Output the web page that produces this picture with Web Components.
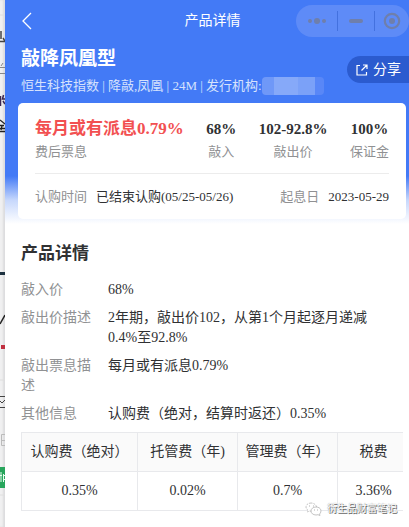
<!DOCTYPE html>
<html lang="zh-CN">
<head>
<meta charset="utf-8">
<meta name="viewport" content="width=device-width, initial-scale=1">
<title>产品详情</title>
<style>
  body {
    margin: 0;
    background: #fff;
    color: #303133;
    font-family: "Liberation Serif", "Noto Sans CJK SC", serif;
    font-size: 14px;
    line-height: 20px;
  }
</style>
</head>
<body>
<product-page>
  <page-edge slot="edge"></page-edge>
  <nav-bar slot="hero">产品详情</nav-bar>
  <product-title slot="hero" name="敲降凤凰型">恒生科技指数 | 降敲,凤凰 | 24M | 发行机构:</product-title>
  <summary-card slot="hero">
    <stat-item label="费后票息" main>每月或有派息0.79%</stat-item>
    <stat-item label="敲入">68%</stat-item>
    <stat-item label="敲出价">102-92.8%</stat-item>
    <stat-item label="保证金">100%</stat-item>
    <date-item slot="dates" label="认购时间">已结束认购(05/25-05/26)</date-item>
    <date-item slot="dates" label="起息日">2023-05-29</date-item>
  </summary-card>
  <detail-section heading="产品详情">
    <detail-row label="敲入价">68%</detail-row>
    <detail-row label="敲出价描述">2年期，敲出价102，从第1个月起逐月递减0.4%至92.8%</detail-row>
    <detail-row label="敲出票息描述">每月或有派息0.79%</detail-row>
    <detail-row label="其他信息">认购费（绝对，结算时返还）0.35%</detail-row>
    <fee-table></fee-table>
  </detail-section>
  <account-mark slot="mark">衍生品财富笔记</account-mark>
</product-page>

<script>
/**
 * Base class: puts the markup in an open shadow root
 */
class BaseElement extends HTMLElement {
  constructor() {
    super();
    this.attachShadow({ mode: 'open' });
  }

  connectedCallback() {
    this.shadowRoot.innerHTML = this.template();
  }
}

/**
 * Page frame: narrow edge of the window behind, and the product page
 */
class ProductPage extends BaseElement {
  template() {
    return `
      <style>
        :host {
          display: grid;
          grid-template-columns: 5px minmax(0, 1fr);
          position: relative;
          min-height: 100vh;
          overflow: hidden;
        }
        .hero {
          padding-bottom: 6px;
          background: linear-gradient(#437af6 0, #437af6 176px, #c6d7fc 200px, #fff 224px);
        }
      </style>
      <slot name="edge"></slot>
      <main>
        <div class="hero"><slot name="hero"></slot></div>
        <slot></slot>
      </main>
      <slot name="mark"></slot>
    `;
  }
}

/**
 * Visible edge of the window that lies behind
 */
class PageEdge extends BaseElement {
  template() {
    return `
      <style>
        :host { display: block; background: #f0f0f1; box-shadow: inset -2px 0 2px #dcdcde; }
        svg { display: block; width: 5px; height: 527px; overflow: hidden; }
      </style>
      <svg viewBox="0 0 5 527" aria-hidden="true">
        <path d="M0 15H5M0 380H5M0 495H5" stroke="#dedede"/>
        <path d="M1 31v8M0 41.500h5M3 38l2 3" stroke="#444" stroke-width="1.5" fill="none"/>
        <path d="M1 66l2-3M0 67.500h5M0 73.500h5" stroke="#888" fill="none"/>
        <path d="M.5 96v10M3.500 95l-1 4h3M3 101l2 3" stroke="#3b2750" stroke-width="1.5" fill="none"/>
        <path d="M0 120l5 4M0 125.500h4M0 128.500h5M2 126l-1 4M0 131.500h5" stroke="#222" stroke-width="1.3" fill="none"/>
        <path d="M0 273.500h5" stroke="#1d3140" stroke-width="3"/>
        <path d="M0 324l5-9" stroke="#222" stroke-width="1.5" fill="none"/>
        <path d="M1 347h4" stroke="#c03040" stroke-width="4"/>
        <path d="M0 396.500h5M0 407.500h5M0 401l2 2 3-3" stroke="#444" fill="none"/>
        <path d="M5 434.500H1.500v11H5M2 440.500h3" stroke="#bbb" fill="none"/>
        <path d="M0 467h5v21H0z" fill="#28a55c"/>
        <path d="M0 475.500h2M1 472v10M3.500 474v8M3 475.500h2M3 479.500h2" stroke="#e8fff0" fill="none"/>
      </svg>
    `;
  }
}

/**
 * Top bar with back button, page title and the mini program capsule
 */
class NavBar extends BaseElement {
  template() {
    return `
      <style>
        :host {
          display: grid;
          grid-template-columns: 124px 1fr 113px;
          align-items: center;
          height: 42px;
          color: #fff;
        }
        button { display: block; border: 0; padding: 0; background: none; cursor: pointer; }
        .back { margin-left: 16px; width: 12px; }
        svg { display: block; }
        .title { margin: 0; font-size: 14px; font-weight: 400; text-align: center; }
        .capsule {
          display: grid;
          grid-template-columns: 41px 37px 35px;
          align-items: center;
          height: 32px;
          border-radius: 16px;
          background: #5e8bf7;
        }
        .capsule button { height: 20px; }
        .capsule button + button { border-left: 1px solid #4371df; }
        .capsule svg { margin: auto; }
      </style>
      <button class="back" aria-label="返回">
        <svg width="12" height="18" viewBox="0 0 12 18" fill="none" stroke="#fff" stroke-width="1.3"><path d="M10 1L2 9l8 8"/></svg>
      </button>
      <h1 class="title"><slot></slot></h1>
      <div class="capsule">
        <button aria-label="更多">
          <svg width="20" height="8" viewBox="0 0 20 8" fill="#6f7fab"><circle cx="3" cy="4" r="2"/><circle cx="10" cy="4" r="3"/><circle cx="17" cy="4" r="2"/></svg>
        </button>
        <button aria-label="最小化">
          <svg width="16" height="4" viewBox="0 0 16 4"><rect x="1" y="0" width="14" height="4" rx="2" fill="#6f7fab"/></svg>
        </button>
        <button aria-label="关闭">
          <svg width="18" height="18" viewBox="0 0 18 18"><circle cx="9" cy="9" r="7.2" fill="none" stroke="#6f7fab" stroke-width="2.2"/><circle cx="9" cy="9" r="3" fill="#6f7fab"/></svg>
        </button>
      </div>
    `;
  }
}

/**
 * Product name, tags, masked issuer and share button
 */
class ProductTitle extends BaseElement {
  template() {
    return `
      <style>
        :host { display: flex; justify-content: space-between; padding: 3px 0 5px 16px; color: #fff; }
        h2 { margin: 0; font-size: 19px; line-height: 28px; }
        p { display: flex; align-items: center; margin: 0; font-size: 13px; line-height: 25px; white-space: nowrap; color: #d6e2fd; }
        .mask { display: block; width: 62px; height: 18px; border-radius: 4px; background: linear-gradient(90deg, #6f98f8 0 12px, #86a9f9 12px 36px, #7ba1f8 36px 53px, #5987f7 53px); }
        button {
          display: flex;
          align-items: center;
          gap: 5px;
          margin-top: 11px;
          width: 62px;
          height: 27px;
          padding: 0 0 0 9px;
          border: 0;
          border-radius: 14px 0 0 14px;
          background: #2b5bcf;
          color: #fff;
          font: inherit;
          white-space: nowrap;
          cursor: pointer;
        }
        svg { flex: none; }
      </style>
      <div>
        <h2>${this.getAttribute('name')}</h2>
        <p><slot></slot><span class="mask"></span></p>
      </div>
      <button>
        <svg width="12" height="12" viewBox="0 0 12 12" fill="none" stroke="#fff" stroke-width="1.2"><path d="M4 1.5H1v9.500h9.500V8M7 1h4v4M11 1L5.500 6.500"/></svg>
        分享
      </button>
    `;
  }
}

/**
 * White card with the key figures and dates
 */
class SummaryCard extends BaseElement {
  template() {
    return `
      <style>
        :host { display: block; margin: 0 3px 0 13px; padding: 14px 17px 12px; border-radius: 5px; background: #fff; }
        .stats, .dates { display: flex; justify-content: space-between; }
        .stats { padding-bottom: 10px; border-bottom: 1px solid #ececec; }
        .dates { padding-top: 13px; }
      </style>
      <div class="stats"><slot></slot></div>
      <div class="dates"><slot name="dates"></slot></div>
    `;
  }
}

class StatItem extends BaseElement {
  template() {
    return `
      <style>
        :host { display: block; text-align: center; white-space: nowrap; }
        :host([main]) { text-align: left; }
        .value { font-size: 15px; line-height: 24px; font-weight: bold; }
        :host([main]) .value { font-size: 17px; color: #f25051; }
        .label { font-size: 13px; line-height: 22px; color: #909193; }
      </style>
      <div class="value"><slot></slot></div>
      <div class="label">${this.getAttribute('label')}</div>
    `;
  }
}

class DateItem extends BaseElement {
  template() {
    return `
      <style>
        :host { display: flex; gap: 9px; font-size: 13px; line-height: 20px; white-space: nowrap; }
        .label { color: #909193; }
      </style>
      <span class="label">${this.getAttribute('label')}</span>
      <span><slot></slot></span>
    `;
  }
}

/**
 * Product details
 */
class DetailSection extends BaseElement {
  template() {
    return `
      <style>
        :host { display: block; padding: 16px 6px 14px 16px; }
        h2 { margin: 0 0 13px; font-size: 17px; line-height: 26px; }
        .rows { display: grid; gap: 8px; }
      </style>
      <h2>${this.getAttribute('heading')}</h2>
      <div class="rows"><slot></slot></div>
    `;
  }
}

class DetailRow extends BaseElement {
  template() {
    return `
      <style>
        :host { display: grid; grid-template-columns: 71px minmax(0, 1fr); column-gap: 16px; padding-right: 26px; }
        .label { color: #909193; }
      </style>
      <span class="label">${this.getAttribute('label')}</span>
      <span><slot></slot></span>
    `;
  }
}

/**
 * Fee table, cut off where it is wider than the page
 */
class FeeTable extends BaseElement {
  template() {
    const fees = [
      ['认购费（绝对）', '0.35%'],
      ['托管费（年)', '0.02%'],
      ['管理费（年）', '0.7%'],
      ['税费', '3.36%']
    ];

    return `
      <style>
        :host { display: block; overflow: hidden; }
        table { width: 100%; min-width: 389px; border-collapse: collapse; table-layout: fixed; text-align: center; }
        .wide { width: 116px; }
        .mid { width: 100px; }
        th, td { height: 38px; padding: 0; border: 1px solid #e8e9ec; font-weight: 400; white-space: nowrap; }
        th { background: #fafafa; }
      </style>
      <table>
        <colgroup><col class="wide"><col class="mid"><col class="mid"><col></colgroup>
        <thead><tr>${fees.map(fee => `<th scope="col">${fee[0]}</th>`).join('')}</tr></thead>
        <tbody><tr>${fees.map(fee => `<td>${fee[1]}</td>`).join('')}</tr></tbody>
      </table>
    `;
  }
}

/**
 * Account watermark over the bottom right corner
 */
class AccountMark extends BaseElement {
  template() {
    return `
      <style>
        :host {
          display: flex;
          align-items: center;
          gap: 5px;
          position: absolute;
          right: 12px;
          bottom: 9px;
          font-size: 10px;
          line-height: 18px;
          color: #fff;
          text-shadow: 1px 1px 0 #666, 0 0 1px #888;
        }
      </style>
      <svg width="17" height="14" viewBox="0 0 17 14" fill="#fff" stroke="#aaa" stroke-width=".7" aria-hidden="true">
        <path stroke-dasharray="2 1" d="M6 1C3 1 1 3 1 5c0 1.500.8 2.500 2 3.300L2.500 10l2-1c3 .8 7-.8 7-4C11.500 3 9 1 6 1z"/>
        <path d="M11 5c-3 0-5 1.800-5 4s2 4 5 4l2-.3 2 .8-.5-1.500C17 10 16.500 5 11 5z"/>
        <path d="M4 4h.5M8 4h.5M9 8h.5M12.500 8h.5" stroke="#666" stroke-width="1"/>
      </svg>
      <span><slot></slot></span>
    `;
  }
}

// Register Web Components
customElements.define('product-page', ProductPage);
customElements.define('page-edge', PageEdge);
customElements.define('nav-bar', NavBar);
customElements.define('product-title', ProductTitle);
customElements.define('summary-card', SummaryCard);
customElements.define('stat-item', StatItem);
customElements.define('date-item', DateItem);
customElements.define('detail-section', DetailSection);
customElements.define('detail-row', DetailRow);
customElements.define('fee-table', FeeTable);
customElements.define('account-mark', AccountMark);
</script>
</body>
</html>
